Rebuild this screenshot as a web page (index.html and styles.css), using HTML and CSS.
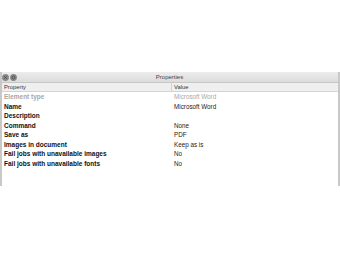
FILE: index.html
```html
<!DOCTYPE html>
<html lang="en">
<head>
    <meta charset="UTF-8">
    <title>Properties</title>
    <link rel="stylesheet" href="styles.css">
</head>
<body>
    <!-- Properties window -->
    <div class="window">
        <div class="title-bar">
            <div class="win-buttons">
                <svg class="win-btn" viewBox="0 0 8 8" width="7" height="7">
                    <circle cx="4" cy="4" r="3.6" fill="#8c8c8c" stroke="#6f6f6f" stroke-width="0.6"/>
                    <path d="M2.6 2.6 L5.4 5.4 M5.4 2.6 L2.6 5.4" stroke="#3a3a3a" stroke-width="0.9"/>
                </svg>
                <svg class="win-btn" viewBox="0 0 8 8" width="7" height="7">
                    <circle cx="4" cy="4" r="3.6" fill="#8c8c8c" stroke="#6f6f6f" stroke-width="0.6"/>
                    <circle cx="4" cy="4" r="1.6" fill="none" stroke="#3a3a3a" stroke-width="0.8"/>
                </svg>
            </div>
            <div class="title">Properties</div>
        </div>

        <div class="table">
            <div class="head-row">
                <div class="cell head-cell">Property</div>
                <div class="cell head-cell value-col">Value</div>
            </div>
            <div class="row disabled">
                <div class="cell key">Element type</div>
                <div class="cell value-col">Microsoft Word</div>
            </div>
            <div class="row">
                <div class="cell key">Name</div>
                <div class="cell value-col">Microsoft Word</div>
            </div>
            <div class="row">
                <div class="cell key">Description</div>
                <div class="cell value-col"></div>
            </div>
            <div class="row">
                <div class="cell key">Command</div>
                <div class="cell value-col">None</div>
            </div>
            <div class="row">
                <div class="cell key">Save as</div>
                <div class="cell value-col">PDF</div>
            </div>
            <div class="row">
                <div class="cell key">Images in document</div>
                <div class="cell value-col">Keep as is</div>
            </div>
            <div class="row">
                <div class="cell key">Fail jobs with unavailable images</div>
                <div class="cell value-col">No</div>
            </div>
            <div class="row">
                <div class="cell key">Fail jobs with unavailable fonts</div>
                <div class="cell value-col">No</div>
            </div>
        </div>
    </div>
</body>
</html>
```

FILE: styles.css
```css
body {
    margin: 0;
    background: #ffffff;
    font-family: "Liberation Sans", Arial, sans-serif;
    color: #1a1a1a;
}

/* Window frame */
.window {
    margin-top: 72px;
    height: 114px;
    border-left: 2px solid #c8c8c8;
    border-right: 2px solid #c8c8c8;
    box-sizing: border-box;
    display: flex;
    flex-direction: column;
}

.title-bar {
    height: 11px;
    background: linear-gradient(#ececec, #dcdcdc);
    border-bottom: 1px solid #c6c6c6;
    display: flex;
    align-items: center;
    box-sizing: border-box;
}

.win-buttons {
    display: flex;
    gap: 1px;
}

.win-btn {
    display: block;
}

.title {
    flex: 1;
    text-align: center;
    font-size: 6px;
    color: #444;
    margin-right: 16px;
}

/* Table */
.table {
    flex: 1;
    background: #fff;
}

.head-row {
    display: flex;
    height: 9px;
    background: #efefef;
    border-bottom: 1px solid #d4d4d4;
    box-sizing: border-box;
    align-items: center;
}

.head-cell {
    font-size: 5.8px;
    color: #333;
}

.head-cell.value-col {
    border-left: 1px solid #d4d4d4;
    align-self: stretch;
    display: flex;
    align-items: center;
}

.row {
    display: flex;
    height: 9.5px;
    align-items: center;
}

.cell {
    width: 169px;
    padding-left: 2px;
    box-sizing: border-box;
    white-space: nowrap;
}

.value-col {
    width: auto;
    flex: 1;
    padding-left: 2px;
}

.key {
    font-size: 6.5px;
    font-weight: bold;
    color: #111;
}

.row .value-col {
    font-size: 6.3px;
    color: #222;
    padding-left: 3px;
}

.row.disabled .key,
.row.disabled .value-col {
    color: #a8a8a8;
}
```
